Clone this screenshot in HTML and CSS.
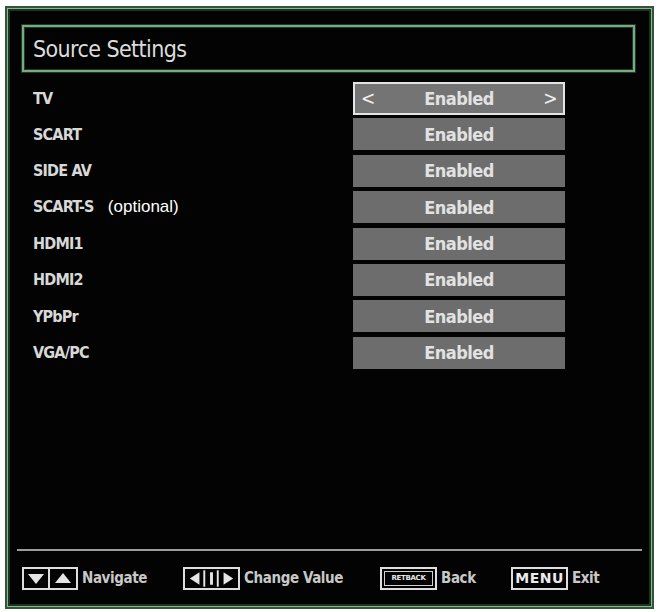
FILE: index.html
```html
<!DOCTYPE html>
<html lang="en">
<head>
  <link rel="stylesheet" href="styles.css">
</head>
<body>
  <div class="frame">
    <div class="title-box">Source Settings</div>

    <div class="rows">
      <div class="row">
        <div class="label">TV</div>
        <div class="value value-active"><span class="arrow">&lt;</span>Enabled<span class="arrow">&gt;</span></div>
      </div>
      <div class="row">
        <div class="label">SCART</div>
        <div class="value">Enabled</div>
      </div>
      <div class="row">
        <div class="label">SIDE AV</div>
        <div class="value">Enabled</div>
      </div>
      <div class="row">
        <div class="label">SCART-S <span class="note">(optional)</span></div>
        <div class="value">Enabled</div>
      </div>
      <div class="row">
        <div class="label">HDMI1</div>
        <div class="value">Enabled</div>
      </div>
      <div class="row">
        <div class="label">HDMI2</div>
        <div class="value">Enabled</div>
      </div>
      <div class="row">
        <div class="label">YPbPr</div>
        <div class="value">Enabled</div>
      </div>
      <div class="row">
        <div class="label">VGA/PC</div>
        <div class="value">Enabled</div>
      </div>
    </div>

    <!-- barra de ayuda -->
    <div class="footer">
      <div class="hint hint-nav">
        <span class="key key-small">
          <svg width="24" height="19" viewBox="0 0 24 19"><polygon points="4,5 20,5 12,15" fill="#e6e6e6"/></svg>
        </span>
        <span class="key key-small">
          <svg width="24" height="19" viewBox="0 0 24 19"><polygon points="4,14 20,14 12,4" fill="#e6e6e6"/></svg>
        </span>
        <span class="hint-text">Navigate</span>
      </div>
      <div class="hint hint-change">
        <span class="key key-wide">
          <svg width="55" height="19" viewBox="0 0 55 19">
            <polygon points="5,9.5 15,3 15,16" fill="#e6e6e6"/>
            <rect x="19" y="1" width="2" height="17" fill="#e6e6e6"/>
            <rect x="26" y="3" width="3" height="13" fill="#e6e6e6"/>
            <rect x="33" y="1" width="2" height="17" fill="#e6e6e6"/>
            <polygon points="50,9.5 40,3 40,16" fill="#e6e6e6"/>
          </svg>
        </span>
        <span class="hint-text">Change Value</span>
      </div>
      <div class="hint hint-back">
        <span class="key key-wide key-retback"><span class="retback">RETBACK</span></span>
        <span class="hint-text">Back</span>
      </div>
      <div class="hint">
        <span class="key key-wide key-menu">MENU</span>
        <span class="hint-text">Exit</span>
      </div>
    </div>
  </div>
</body>
</html>
```

FILE: styles.css
```css
body {
  margin: 0;
  background-color: #fff;
  font-family: "DejaVu Sans Condensed", "DejaVu Sans", sans-serif;
}
.frame {
  display: flex;
  flex-direction: column;
  box-sizing: border-box;
  width: 649px;
  height: 603px;
  margin: 6px 0 0 5px;
  padding: 17px 10px 0 10px;
  background-color: #020302;
  border: 2px solid #34543a;
  box-shadow: inset 0 0 0 1px #86b892, inset 0 0 0 3px #1d3322;
}
.title-box {
  box-sizing: border-box;
  height: 47px;
  margin: 0 7px 0 5px;
  padding: 0 9px;
  border: 2px solid #78aa84;
  box-shadow: 0 0 0 1px #1f3a26, inset 0 0 0 1px #1f3a26;
  color: #dcdcdc;
  font-size: 23px;
  line-height: 44px;
  letter-spacing: -0.6px;
}
.rows {
  display: flex;
  flex-direction: column;
  gap: 4.4px;
  margin: 10px 7px 0 5px;
}
.row {
  display: flex;
  align-items: center;
  height: 32px;
}
.label {
  width: 331px;
  padding-left: 11px;
  box-sizing: border-box;
  color: #d8d8d8;
  font-weight: bold;
  font-size: 16px;
  letter-spacing: -0.8px;
}
.note {
  margin-left: 10px;
  color: #fff;
  font-family: "Liberation Sans", Arial, sans-serif;
  font-weight: normal;
  font-size: 17px;
  letter-spacing: 0;
}
.value {
  display: flex;
  justify-content: center;
  align-items: center;
  box-sizing: border-box;
  width: 212px;
  height: 32px;
  background-color: #6d6d6d;
  color: #e2e2e2;
  font-size: 18px;
  font-weight: bold;
  letter-spacing: -0.5px;
}
.value-active {
  justify-content: space-between;
  height: 33px;
  padding: 0 6px;
  border: 2px solid #e4e4e4;
  background-color: #747474;
}
.arrow {
  font-weight: normal;
  font-size: 19px;
  color: #f0f0f0;
}
.footer {
  display: flex;
  align-items: center;
  margin-top: auto;
  height: 58px;
  box-sizing: border-box;
  padding: 0 0 2px 5px;
  border-top: 2px solid #9c9c9c;
}
.hint {
  display: flex;
  align-items: center;
}
.hint-nav {
  width: 161px;
}
.hint-change {
  width: 197px;
}
.hint-back {
  width: 131px;
}
.key {
  display: flex;
  align-items: center;
  justify-content: center;
  box-sizing: border-box;
  height: 23px;
  border: 2px solid #dedede;
}
.key-small {
  width: 28px;
}
.key-small + .key-small {
  border-left: none;
  width: 28px;
}
.key-wide {
  width: 57px;
}
.key-retback {
  padding: 2px;
}
.retback {
  display: block;
  width: 100%;
  height: 100%;
  box-sizing: border-box;
  border: 1px solid #cfcfcf;
  color: #e8e8e8;
  font-family: "DejaVu Sans", sans-serif;
  font-size: 7px;
  font-weight: bold;
  line-height: 13px;
  text-align: center;
  letter-spacing: -0.3px;
}
.key-menu {
  color: #ececec;
  font-family: "DejaVu Sans", sans-serif;
  font-weight: bold;
  font-size: 14px;
  letter-spacing: 0.5px;
}
.hint-text {
  margin-left: 4px;
  color: #c8c8c8;
  font-size: 15px;
  font-weight: bold;
  letter-spacing: -0.4px;
}
```
